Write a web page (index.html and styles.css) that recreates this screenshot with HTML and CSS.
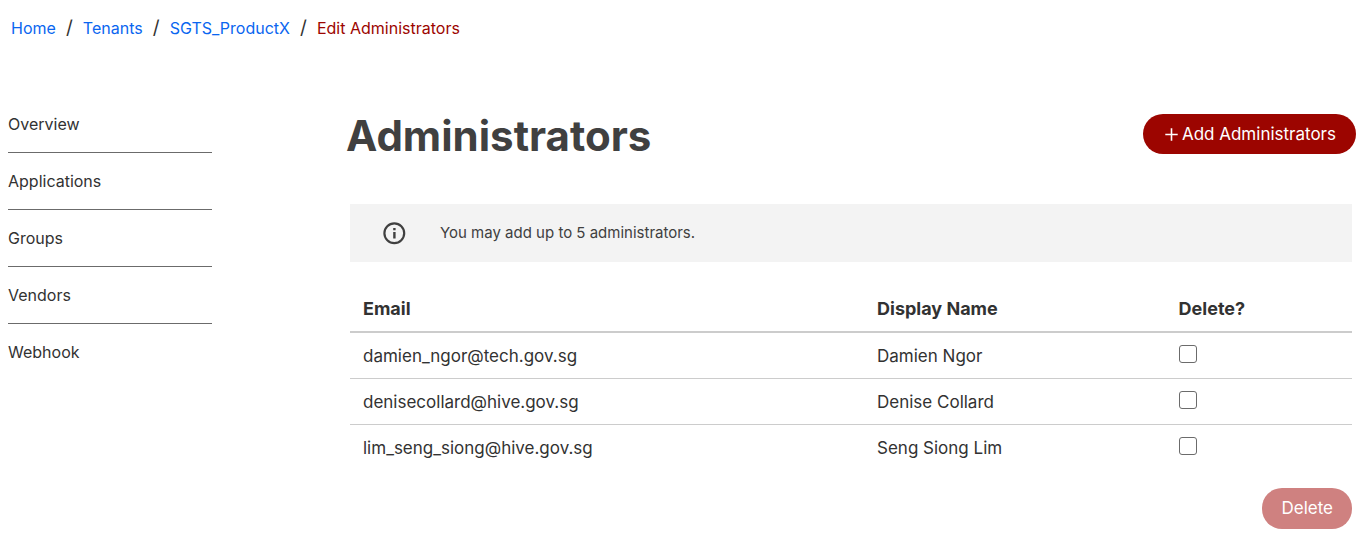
FILE: index.html
```html
<!DOCTYPE html>
<html lang="en">
<head>
<meta charset="utf-8">
<title>Edit Administrators</title>
<link rel="stylesheet" href="styles.css">
</head>
<body>
<nav class="breadcrumb" aria-label="Breadcrumb">
  <a href="#">Home</a><span class="sep">/</span><a href="#">Tenants</a><span class="sep">/</span><a href="#">SGTS_ProductX</a><span class="sep">/</span><span class="current">Edit Administrators</span>
</nav>
<div class="layout">
  <nav class="sidebar" aria-label="Tenant">
    <a href="#">Overview</a>
    <a href="#">Applications</a>
    <a href="#">Groups</a>
    <a href="#">Vendors</a>
    <a href="#">Webhook</a>
  </nav>
  <main class="main">
    <header class="heading">
      <h1>Administrators</h1>
      <button type="button" class="btn btn-add"><svg width="13" height="13" viewBox="0 0 13 13" aria-hidden="true"><path d="M6.5 .3v12.4M.3 6.5h12.4" stroke="currentColor" stroke-width="1.6"/></svg>Add Administrators</button>
    </header>
    <div class="content">
      <div class="notice">
        <svg width="24" height="24" viewBox="0 0 24 24" aria-hidden="true"><circle cx="12.3" cy="12.3" r="9.9" fill="none" stroke="currentColor" stroke-width="2.2"/><path d="M11.2 7h2.4v2.2h-2.4zM11.2 11h2.4v6.6h-2.4z" fill="currentColor"/></svg>
        <span>You may add up to 5 administrators.</span>
      </div>
      <table class="admins">
        <thead><tr><th class="col-email">Email</th><th class="col-name">Display Name</th><th>Delete?</th></tr></thead>
        <tbody>
          <tr><td>damien_ngor@tech.gov.sg</td><td>Damien Ngor</td><td><input type="checkbox" aria-label="Delete Damien Ngor"></td></tr>
          <tr><td>denisecollard@hive.gov.sg</td><td>Denise Collard</td><td><input type="checkbox" aria-label="Delete Denise Collard"></td></tr>
          <tr><td>lim_seng_siong@hive.gov.sg</td><td>Seng Siong Lim</td><td><input type="checkbox" aria-label="Delete Seng Siong Lim"></td></tr>
        </tbody>
      </table>
      <div class="actions"><button type="button" class="btn btn-delete" disabled>Delete</button></div>
    </div>
  </main>
</div>
</body>
</html>
```
FILE: styles.css
```css
* { box-sizing: border-box; }
body {
  margin: 0;
  background: #fff;
  color: #323232;
  font-family: Inter, "Liberation Sans", sans-serif;
  font-size: 16px;
}
a { text-decoration: none; }
.breadcrumb {
  display: flex;
  align-items: center;
  padding: 16px 11px;
  line-height: 24px;
}
.breadcrumb a { color: #0a66f0; }
.breadcrumb .sep { width: 27px; text-align: center; font-size: 19px; }
.breadcrumb .current { color: #9c0500; }
.layout {
  display: grid;
  grid-template-columns: 204px minmax(0, 1fr);
  column-gap: 134px;
  padding: 40px 9px 0 8px;
}
.sidebar { display: flex; flex-direction: column; }
.sidebar a {
  padding: 16px 0;
  line-height: 24px;
  color: #323232;
  border-bottom: 1px solid #6b6b6b;
}
.sidebar a:last-child { border-bottom: 0; }
.heading {
  display: flex;
  justify-content: space-between;
  align-items: flex-start;
  padding-top: 18px;
}
h1 { margin: 0; font-size: 42px; line-height: 44px; color: #404040; }
.btn {
  display: inline-flex;
  align-items: center;
  justify-content: center;
  height: 40px;
  border: 0;
  border-radius: 20px;
  color: #fff;
  background: #9c0500;
  font: inherit;
  font-size: 17px;
}
.btn-add { gap: 4px; padding: 0 20px 0 22px; }
.content { padding: 46px 4px 0; }
.notice {
  display: flex;
  align-items: center;
  gap: 34px;
  padding: 17px 32px;
  background: #f3f3f3;
  color: #404040;
  font-size: 15px;
  line-height: 24px;
}
.admins {
  width: 100%;
  margin-top: 24px;
  border-collapse: collapse;
  table-layout: fixed;
  font-size: 17px;
  line-height: 22px;
}
.admins th, .admins td { padding: 12px 13px 11px; text-align: left; height: 46px; vertical-align: top; }
.admins th { border-bottom: 2px solid #ccc; font-size: 18px; line-height: 21px; }
.admins td { border-bottom: 1px solid #ccc; }
.admins tr:last-child td { border-bottom: 0; }
.col-email { width: 51.3%; }
.col-name { width: 30.1%; }
.admins input {
  display: block;
  appearance: none;
  width: 18px;
  height: 18px;
  margin: 0;
  border: 1px solid #6b6b6b;
  border-radius: 3px;
  background: #fff;
}
.admins input:checked { background: #9c0500; }
.actions { display: flex; justify-content: flex-end; padding-top: 17px; }
.btn-delete { height: 41px; padding: 0 19px; background: #cf8180; }
```
